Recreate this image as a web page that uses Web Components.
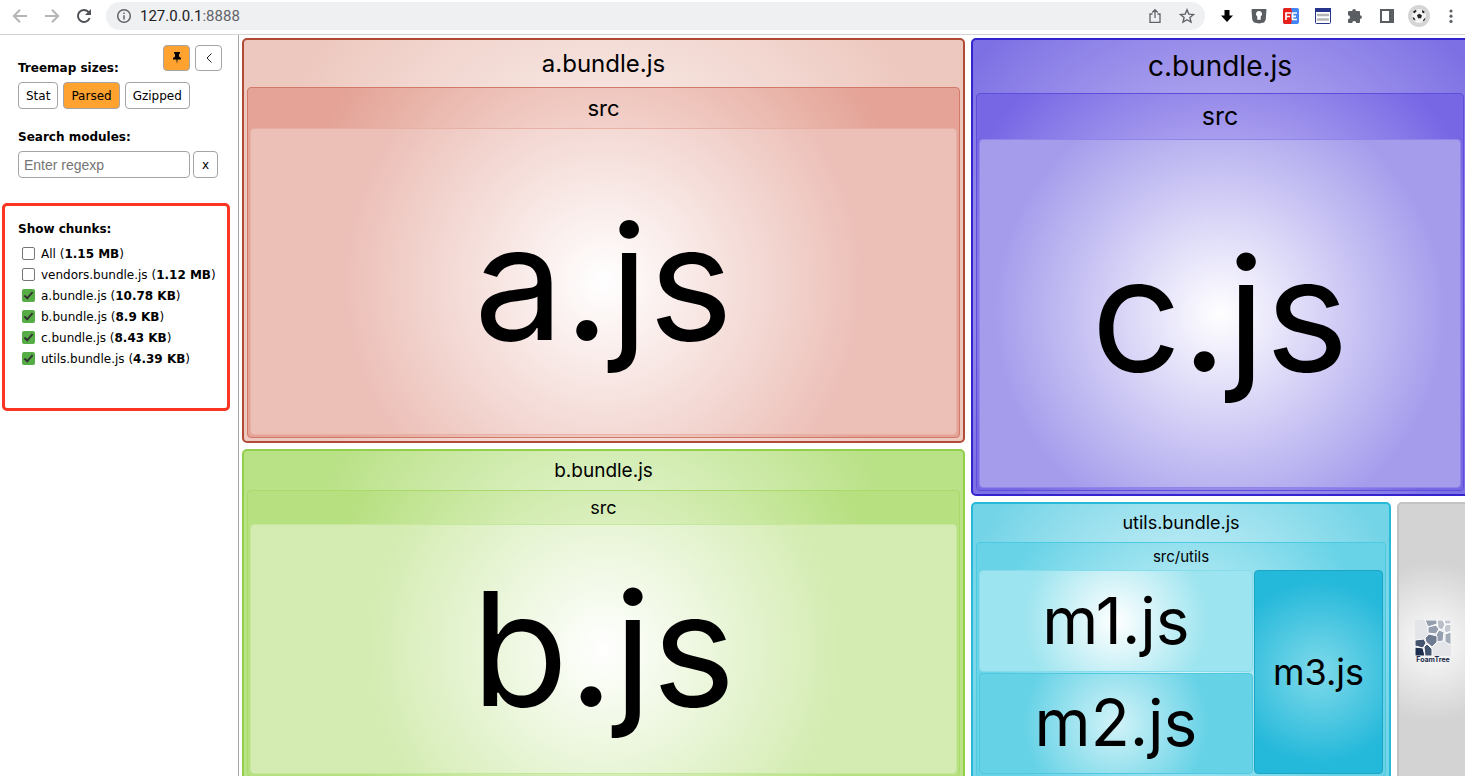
<!DOCTYPE html>
<html lang="en">
<head>
<meta charset="utf-8">
<title>Webpack Bundle Analyzer</title>
<style>
  html, body { margin: 0; height: 100%; }
  body { overflow: hidden; background: #fff; color: #000; font-family: "DejaVu Sans", Verdana, sans-serif; }
  .map { --cols: 723fr 498fr; }
  #left { --rows: 405fr 333fr; }
  #right { --rows: 458fr 280fr; }
  #utils-row { --cols: 420fr 72fr; }
  #utils-src > tree-split { --cols: 276fr 130fr; --gap: 1px; }
  #m12 { --rows: 1fr 1fr; --gap: 1px; }
  #a { --line: #b24a38; --edge: #edc8bf; --core: #fdf8f6; --r: 345px; --label: 24px; --head: 47px; }
  #a-src { --line: #d3796a; --edge: #e4a396; --core: #fdf4f2; --r: 310px; --label: 22px; --head: 40px; }
  #a-js { --line: #e8b1a5; --edge: #ecbfb7; --core: #ffffff; --r: 262px; --label: 160px; }
  #b { --line: #92d04b; --edge: #b9e186; --core: #f2fae8; --r: 310px; --label: 19px; --head: 39px; }
  #b-src { --line: #a9da6b; --edge: #b7e081; --core: #f0f9e4; --r: 280px; --label: 18px; --head: 33px; }
  #b-js { --line: #c6e79e; --edge: #d4ecb2; --core: #ffffff; --r: 235px; --label: 158px; }
  #c { --line: #3324d0; --edge: #7d70e4; --core: #d9d5f8; --r: 320px; --label: 28px; --head: 53px; }
  #c-src { --line: #5f4edb; --edge: #7767e5; --core: #e3dff9; --r: 280px; --label: 25px; --head: 45px; }
  #c-js { --line: #8f84e8; --edge: #a59dec; --core: #ffffff; --r: 225px; --label: 158px; }
  #utils { --line: #27b9d8; --edge: #74d4e7; --core: #e2f7fb; --r: 225px; --label: 18px; --head: 38px; }
  #utils-src { --line: #4ccae2; --edge: #68d3e7; --core: #d9f4f9; --r: 190px; --label: 15px; --head: 27px; }
  #m1, #m2 { --r: 92px; --label: 64px; }
  #m1 { --line: #86dcea; --edge: #9ce4ef; --core: #ffffff; }
  #m2 { --line: #50c8df; --edge: #66d2e6; --core: #d2f3f8; }
  #m3 { --line: #1da5c4; --edge: #24b8da; --core: #7fdaea; --r: 92px; --label: 36px; }
  #credit { --line: #c3c3c3; --edge: #d3d3d3; --core: #fcfcfc; --r: 80px; }
</style>
</head>
<body>
<analyzer-app>
  <browser-bar slot="bar" host="127.0.0.1" port=":8888"></browser-bar>
  <side-bar slot="side">
    <chunk-item name="All" size="1.15 MB"></chunk-item>
    <chunk-item name="vendors.bundle.js" size="1.12 MB"></chunk-item>
    <chunk-item name="a.bundle.js" size="10.78 KB" checked></chunk-item>
    <chunk-item name="b.bundle.js" size="8.9 KB" checked></chunk-item>
    <chunk-item name="c.bundle.js" size="8.43 KB" checked></chunk-item>
    <chunk-item name="utils.bundle.js" size="4.39 KB" checked></chunk-item>
  </side-bar>
  <tree-split class="map">
    <tree-split id="left">
      <tree-group id="a" label="a.bundle.js" root>
        <tree-group id="a-src" label="src"><tree-leaf id="a-js" label="a.js"></tree-leaf></tree-group>
      </tree-group>
      <tree-group id="b" label="b.bundle.js" root>
        <tree-group id="b-src" label="src"><tree-leaf id="b-js" label="b.js"></tree-leaf></tree-group>
      </tree-group>
    </tree-split>
    <tree-split id="right">
      <tree-group id="c" label="c.bundle.js" root>
        <tree-group id="c-src" label="src"><tree-leaf id="c-js" label="c.js"></tree-leaf></tree-group>
      </tree-group>
      <tree-split id="utils-row">
        <tree-group id="utils" label="utils.bundle.js" root>
          <tree-group id="utils-src" label="src/utils">
            <tree-split>
              <tree-split id="m12">
                <tree-leaf id="m1" label="m1.js"></tree-leaf>
                <tree-leaf id="m2" label="m2.js"></tree-leaf>
              </tree-split>
              <tree-leaf id="m3" label="m3.js"></tree-leaf>
            </tree-split>
          </tree-group>
        </tree-group>
        <tree-leaf id="credit" root><foamtree-logo></foamtree-logo></tree-leaf>
      </tree-split>
    </tree-split>
  </tree-split>
</analyzer-app>

<script>
const define = (name, html, setup) => {
  const template = document.createElement('template');
  template.innerHTML = html;
  customElements.define(name, class extends HTMLElement {
    connectedCallback() {
      if (this.shadowRoot) return;
      this.attachShadow({ mode: 'open' }).append(template.content.cloneNode(true));
      if (setup) setup(this, this.shadowRoot);
    }
  });
};

define('analyzer-app', `
<style>
  :host { display: flex; flex-direction: column; height: 100vh; }
  .body { flex: 1; display: flex; min-height: 0; }
  main { flex: 1; min-width: 0; display: flex; overflow: hidden; padding: 3px 0 0 3px; }
  /* the map runs a little past the window at the right and the bottom */
  ::slotted(.map) { flex: 1; margin: 0 -4px -6px 0; }
</style>
<slot name="bar"></slot>
<div class="body"><slot name="side"></slot><main><slot></slot></main></div>`);

define('browser-bar', `
<style>
  :host { display: flex; align-items: center; height: 34px; flex: none; padding: 0 6px 0 12px; border-bottom: 1px solid #d2d3d5; box-sizing: content-box; font: 14px Roboto, sans-serif; background: #fff; }
  button { border: 0; padding: 0; margin: 0; background: none; display: flex; align-items: center; justify-content: center; width: 16px; height: 16px; }
  svg { display: block; }
  nav, .tools { display: flex; gap: 16px; padding-bottom: 2px; }
  .address { flex: 1; display: flex; align-items: center; gap: 8px; height: 28px; margin: 0 14px 2px 14px; padding: 0 10px; border-radius: 14px; background: #eff0f2; color: #5f6368; }
  .url { flex: 1; white-space: nowrap; font-size: 15px; line-height: 28px; }
  .url b { font-weight: 400; color: #202124; }
  .address .end { display: flex; align-items: center; gap: 16px; }
  .avatar { width: 22px; height: 22px; margin: -3px; }
</style>
<nav>
  <button aria-label="Back"><svg width="16" height="16" fill="none" stroke="#b4b6b8" stroke-width="2"><path d="M15 8H2M8 1.7 1.8 8 8 14.3"/></svg></button>
  <button aria-label="Forward"><svg width="16" height="16" fill="none" stroke="#b4b6b8" stroke-width="2"><path d="M1 8h13M8 1.7 14.2 8 8 14.3"/></svg></button>
  <button aria-label="Reload"><svg width="16" height="16" fill="none" stroke="#4f5358" stroke-width="2"><path d="M13.6 10A6 6 0 1 1 12.4 3.9L14 5.5"/><path d="M15 1v6H9z" fill="#4f5358" stroke="none"/></svg></button>
</nav>
<div class="address">
  <svg width="16" height="16" fill="none" stroke="#5f6368" stroke-width="1.5"><circle cx="8" cy="8" r="6.3"/><path d="M8 7.2v4.3M8 4.4V6"/></svg>
  <span class="url"><b></b><span class="port"></span></span>
  <span class="end">
    <button aria-label="Share"><svg width="16" height="16" fill="none" stroke="#5f6368" stroke-width="1.3"><path d="M5.5 6H3v8.3h10V6h-2.500M8 10V1.800M5.200 4.500 8 1.700l2.800 2.800"/></svg></button>
    <button aria-label="Bookmark"><svg width="16" height="16" fill="none" stroke="#5f6368" stroke-width="1.4"><path d="m8 1.800 1.800 4.300 4.700.4-3.600 3 1.100 4.600L8 11.700l-4 2.400 1.100-4.600-3.600-3 4.700-.4z"/></svg></button>
  </span>
</div>
<div class="tools">
  <button aria-label="Downloads"><svg width="16" height="16"><path d="M5.500 2h5v5.500H14L8 14 2 7.500h3.500z"/></svg></button>
  <button aria-label="Password manager"><svg width="16" height="16"><path d="M1.500 1h13a1 1 0 0 1 1 1l-.8 10L13 14.500 8 15.500l-5-1L1.300 12 .5 2a1 1 0 0 1 1-1z" fill="#5a5e62"/><path d="M8 3a3 3 0 0 1 1.700 5.500v3.300H6.300V8.500A3 3 0 0 1 8 3z" fill="#fff"/></svg></button>
  <button aria-label="FE helper"><svg width="16" height="16"><rect width="16" height="16" rx="2" fill="#4285f4"/><path d="M2 0h6l1 3-1 5 1 4-1 4H2a2 2 0 0 1-2-2V2a2 2 0 0 1 2-2z" fill="#e8201c"/><path d="M3 12V5h5M3 8.500h4M14 5H9.500v6.500H14M9.500 8.300H13" fill="none" stroke="#fff" stroke-width="1.700"/></svg></button>
  <button aria-label="Reader"><svg width="16" height="16"><rect x=".5" y=".5" width="15" height="15" rx="1" fill="#fff" stroke="#26358b"/><path d="M0 0h16v4H0z" fill="#26358b"/><path d="M3 7h10M3 11.500h10" stroke="#b5b5b5" stroke-width="2.500" stroke-linecap="round"/></svg></button>
  <button aria-label="Extensions"><svg width="16" height="16"><path d="M5.200 3a1.900 1.900 0 0 1 3.800 0H12a1 1 0 0 1 1 1v3.200a1.900 1.900 0 0 1 0 3.800v3a1 1 0 0 1-1 1H9.200a2 2 0 0 0-4 0H2a1 1 0 0 1-1-1v-2.800a2 2 0 0 0 0-4V4a1 1 0 0 1 1-1z" fill="#5a5e62"/></svg></button>
  <button aria-label="Side panel"><svg width="16" height="16"><path d="M1 1h14v14H1z" fill="#5a5e62"/><path d="M3 3h7v10H3z" fill="#fff"/></svg></button>
  <button aria-label="Profile" class="avatar"><svg width="22" height="22"><circle cx="11" cy="11" r="11" fill="#d5d5d5"/><circle cx="11" cy="11" r="7" fill="#f3f3f3"/><path d="m9 10 2.500-1.200L14 10.500l-1 2.800h-3zM5 6.500l3-1.700.5 1.700L6 8.500zM14 5l2.500 1.500-.3 2-2-1zM4.500 12l2 1 1 2.500-2-.8zM15.500 14.500l2-2-.7 2.700-2 1.300z" fill="#222"/></svg></button>
  <button aria-label="Menu"><svg width="16" height="16" fill="#5f6368"><circle cx="8" cy="3" r="1.600"/><circle cx="8" cy="8.200" r="1.600"/><circle cx="8" cy="13.400" r="1.600"/></svg></button>
</div>`, (host, root) => {
  root.querySelector('b').textContent = host.getAttribute('host');
  root.querySelector('.port').textContent = host.getAttribute('port');
});

define('side-bar', `
<style>
  :host { display: block; flex: none; width: 239px; box-sizing: border-box; border-right: 1px solid #a5a5a5; font-size: 12px; line-height: 16px; background: #fff; }
  button, input { font: inherit; color: #000; box-sizing: border-box; height: 27px; border: 1px solid #a5a5a5; border-radius: 4px; background: #fff; margin: 0; }
  button { padding: 0 7px; display: flex; align-items: center; justify-content: center; }
  .on { background: #ffa22f; }
  header { display: flex; align-items: flex-start; justify-content: space-between; padding: 10px 16px 0 18px; }
  h2 { margin: 0; font-size: 12px; line-height: 16px; font-weight: 700; white-space: nowrap; }
  header h2 { margin-top: 15px; }
  header div { display: flex; gap: 5px; }
  header button { width: 27px; height: 26px; padding: 0; }
  .row { display: flex; padding-left: 18px; }
  .sizes { gap: 5px; margin-top: 6px; }
  .search { margin-top: 20px; padding-left: 18px; }
  .search .row { padding: 0; margin-top: 6px; gap: 3px; }
  input { width: 172px; padding: 0 5px; font: 14px "Liberation Sans", Arial, sans-serif; outline: 0; }
  input::placeholder { color: #757575; opacity: 1; }
  .clear { width: 25px; padding: 0; }
  .chunks { margin: 25px 8px 0 2px; height: 208px; box-sizing: border-box; border: 3px solid #fb3524; border-radius: 5px; padding: 15px 0 0 13px; }
  .chunks h2 { margin-bottom: 7px; }
</style>
<header>
  <h2>Treemap sizes:</h2>
  <div>
    <button class="on" aria-label="Pin"><svg width="10" height="14"><path d="M2 1h6v1.500L7 3v2.500L9 7v1.500H5.600L5 13l-.6-4.500H1V7l2-1.500V3l-1-.5z"/></svg></button>
    <button aria-label="Hide"><svg width="8" height="12" fill="none" stroke="#222"><path d="M6.500 1.500 2 6l4.500 4.500"/></svg></button>
  </div>
</header>
<div class="row sizes"><button>Stat</button><button class="on">Parsed</button><button>Gzipped</button></div>
<div class="search">
  <h2><label for="query">Search modules:</label></h2>
  <div class="row"><input id="query" type="text" placeholder="Enter regexp"><button class="clear">x</button></div>
</div>
<section class="chunks"><h2>Show chunks:</h2><slot></slot></section>`);

define('chunk-item', `
<style>
  :host { display: block; font-size: 12px; line-height: 21px; white-space: nowrap; }
  label { display: flex; align-items: center; }
  input { appearance: none; flex: none; width: 13px; height: 13px; margin: 0 6px 2px 4px; box-sizing: border-box; border: 1px solid #767676; border-radius: 2px; background: #fff; }
  input:checked { border: 0; background: #57ad45; display: grid; place-items: center; }
  input:checked::before { content: ""; width: 9px; height: 5px; box-sizing: border-box; border: solid #333; border-width: 0 0 2px 2px; transform: rotate(-48deg); margin-bottom: 3px; }
</style>
<label><input type="checkbox"><span><span class="name"></span> (<b></b>)</span></label>`, (host, root) => {
  root.querySelector('.name').textContent = host.getAttribute('name');
  root.querySelector('b').textContent = host.getAttribute('size');
  root.querySelector('input').checked = host.hasAttribute('checked');
});

/* The tracks are read off the host, then reset for the splits nested inside it. */
define('tree-split', `
<style>
  :host { display: grid; flex: 1 1 0; gap: 6px; min-width: 0; min-height: 0; }
</style>
<slot></slot>`, (host) => {
  const own = getComputedStyle(host);
  const parent = getComputedStyle(host.parentElement);
  const tracks = (name) => {
    const value = own.getPropertyValue(name).trim();
    return value && value !== parent.getPropertyValue(name).trim()
      ? value.split(/\s+/).map((size) => `minmax(0, ${size})`).join(' ') : 'minmax(0, 1fr)';
  };
  host.style.gridTemplateColumns = tracks('--cols');
  host.style.gridTemplateRows = tracks('--rows');
  host.style.gap = own.getPropertyValue('--gap').trim() || '6px';
});

const cell = `
  :host { display: flex; min-width: 0; min-height: 0; box-sizing: border-box; border: 1px solid var(--line); border-radius: 4px;
    background: radial-gradient(circle var(--r) at center, var(--core), var(--edge)) border-box; font-family: Inter, sans-serif; color: #000; }
  :host([root]) { border-width: 2px; border-radius: 5px; }
  .label { font-size: var(--label); white-space: nowrap; text-align: center; }`;

define('tree-group', `
<style>${cell}
  :host { flex: 1 1 0; flex-direction: column; padding: 0 2px 2px; }
  :host([root]) { padding: 0 3px 3px; }
  .label { flex: none; line-height: var(--head); }
  .content { flex: 1 1 0; display: flex; min-height: 0; }
</style>
<div class="label"></div><div class="content"><slot></slot></div>`, (host, root) => {
  root.querySelector('.label').textContent = host.getAttribute('label');
});

define('tree-leaf', `
<style>${cell}
  :host { flex: 1 1 0; align-items: center; justify-content: center; }
  .label { line-height: 1; }
</style>
<div class="label"></div><slot></slot>`, (host, root) => {
  root.querySelector('.label').textContent = host.getAttribute('label') || '';
});

define('foamtree-logo', `
<style>
  :host { display: flex; flex-direction: column; align-items: center; font: 700 7px/8px Inter, sans-serif; color: #1d2d4d; }
</style>
<svg width="36" height="36" viewBox="0 0 36 36" stroke="#fff" stroke-width="1">
  <rect width="36" height="36" rx="1" fill="#e3e5e8" stroke="none"/>
  <path d="M10 0h12v4l-9 3z" fill="#949eae"/><path d="m13 7 8-2 3 4-3 5-8-1z" fill="#949eae"/>
  <path d="m22 0h6l2 5-3 5-4-2z" fill="#b8bec8"/><path d="M29 0h7v4h-6zM30 5l6-1v7l-5 2-2-3z" fill="#c3c8d0"/>
  <path d="m24 10 5 2-1 9-6 1-1-7z" fill="#949eae"/><path d="m30 14 6-2v13l-6-3z" fill="#a2abb8"/>
  <path d="m10 18 4-4 8 2v6l-5 5-6-5z" fill="#6d7a90"/><path d="m0 20 9-1 2 4-3 5-8-2z" fill="#44536e"/>
  <path d="m0 27 8 1 2 8H0z" fill="#1d2d4d"/><path d="m9 27 3-3 5 5v7h-7z" fill="#44536e"/>
</svg>
<span>FoamTree</span>`);
</script>
</body>
</html>
